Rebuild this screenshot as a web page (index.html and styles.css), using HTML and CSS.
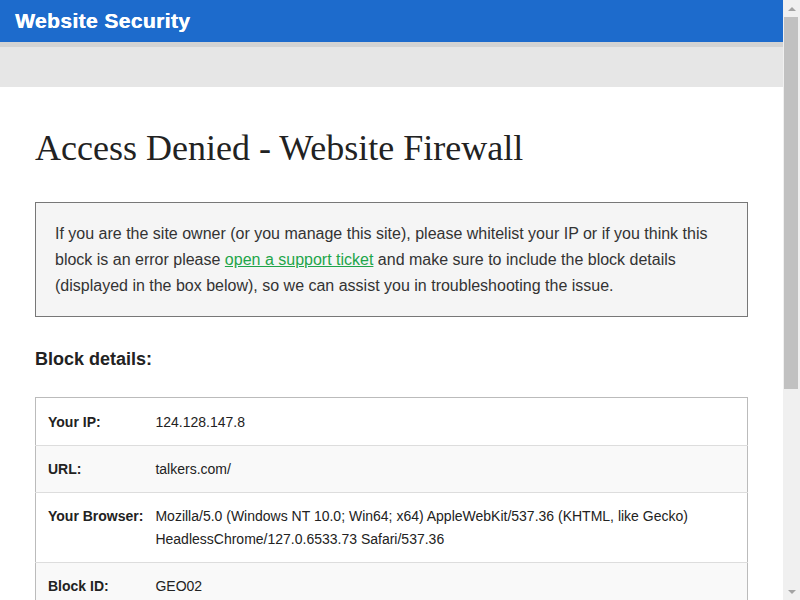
FILE: index.html
```html
<!DOCTYPE html>
<html lang="en">
<head>
<meta charset="utf-8">
<title>Sucuri WebSite Firewall - Access Denied</title>
<link rel="stylesheet" href="styles.css">
</head>
<body>
<div class="page">
  <header class="topbar">
    <div class="brand">Website Security</div>
  </header>
  <div class="subbar"></div>
  <main class="content">
    <h1 class="title">Access Denied - Website Firewall</h1>
    <div class="notice">
      <p>If you are the site owner (or you manage this site), please whitelist your IP or if you think this block is an error please <a class="link" href="#">open a support ticket</a> and make sure to include the block details (displayed in the box below), so we can assist you in troubleshooting the issue.</p>
    </div>
    <h2 class="subtitle">Block details:</h2>
    <table class="details">
      <tr><th>Your IP:</th><td>124.128.147.8</td></tr>
      <tr><th>URL:</th><td>talkers.com/</td></tr>
      <tr><th>Your Browser:</th><td>Mozilla/5.0 (Windows NT 10.0; Win64; x64) AppleWebKit/537.36 (KHTML, like Gecko) HeadlessChrome/127.0.6533.73 Safari/537.36</td></tr>
      <tr><th>Block ID:</th><td>GEO02</td></tr>
      <tr><th>Block reason:</th><td>Access from your Country was disabled by the administrator.</td></tr>
      <tr><th>Time:</th><td>2024-07-30 02:14:51</td></tr>
      <tr><th>Server ID:</th><td>14013</td></tr>
    </table>
    <footer class="foot">
      <p>Sucuri Website Firewall - Contact Us</p>
    </footer>
  </main>
</div>
<div class="scrollbar" aria-hidden="true">
  <div class="sb-btn"><span class="arrow-up"></span></div>
  <div class="sb-track"><div class="sb-thumb"></div></div>
  <div class="sb-btn"><span class="arrow-down"></span></div>
</div>
</body>
</html>
```

FILE: styles.css
```css
html, body {
  margin: 0;
  padding: 0;
}
body {
  font-family: "Liberation Sans", Arial, sans-serif;
  color: #222;
  background: #fff;
}
.page {
  margin-right: 17px;
}
.topbar {
  background: #1d6bcc;
  height: 42px;
  border-bottom: 5px solid #d3d3d3;
  display: flex;
  align-items: center;
  padding: 0 15px;
}
.brand {
  color: #fff;
  font-weight: bold;
  font-size: 21px;
  letter-spacing: 0.4px;
  text-shadow: 0.4px 0 0 #fff;
}
.subbar {
  background: #e6e6e6;
  height: 40px;
}
.content {
  padding: 0 35px 60px;
}
.title {
  font-family: "Liberation Serif", "Times New Roman", serif;
  font-weight: normal;
  font-size: 36px;
  margin: 0;
  padding-top: 41px;
  line-height: 40px;
  color: #222;
}
.notice {
  margin-top: 34px;
  background: #f5f5f5;
  border: 1px solid #777;
  padding: 18px 19px 17px;
}
.notice p {
  margin: 0;
  font-size: 16px;
  line-height: 26px;
  color: #333;
}
.link {
  color: #1ea54a;
  text-decoration: underline;
}
.subtitle {
  font-size: 18px;
  font-weight: bold;
  margin: 31px 0 0;
  line-height: 22px;
  color: #222;
}
.details {
  margin-top: 27px;
  width: 100%;
  border-collapse: collapse;
  border: 1px solid #bbb;
  font-size: 14px;
}
.details tr {
  border-bottom: 1px solid #ddd;
}
.details tr:nth-child(even) {
  background: #f9f9f9;
}
.details th, .details td {
  text-align: left;
  vertical-align: top;
  padding: 12px 12px 11px;
  line-height: 23px;
}
.details tr:first-child th, .details tr:first-child td {
  padding-top: 13px;
}
.details th {
  width: 84px;
  font-weight: bold;
  padding-right: 0;
  white-space: nowrap;
}
.details td {
  padding-left: 12px;
}
.foot {
  margin-top: 40px;
  font-size: 14px;
  color: #555;
  line-height: 22px;
}
.foot p {
  margin: 0;
}

/* browser scrollbar, drawn over the viewport's right edge */
.scrollbar {
  position: fixed;
  top: 0;
  right: 0;
  bottom: 0;
  width: 17px;
  background: #f0f0f0;
  display: flex;
  flex-direction: column;
}
.sb-btn {
  height: 17px;
  display: flex;
  align-items: center;
  justify-content: center;
}
.arrow-up {
  width: 0;
  height: 0;
  border-left: 4px solid transparent;
  border-right: 4px solid transparent;
  border-bottom: 4px solid #a3a3a3;
}
.arrow-down {
  width: 0;
  height: 0;
  border-left: 4px solid transparent;
  border-right: 4px solid transparent;
  border-top: 4px solid #a3a3a3;
}
.sb-track {
  flex: 1;
  padding: 0 2px 0 1px;
}
.sb-thumb {
  height: 372px;
  background: #c1c1c1;
}
```
